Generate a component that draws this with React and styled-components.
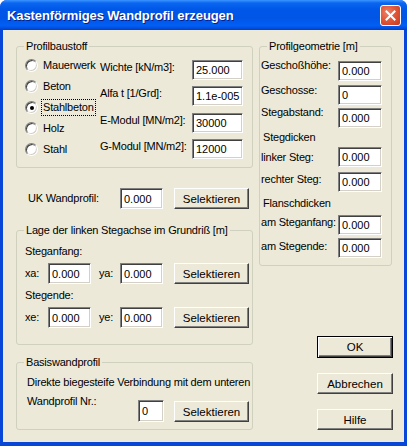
import React from "react";
import styled, { createGlobalStyle } from "styled-components";

const GlobalStyle = createGlobalStyle`
  html, body {
    margin: 0;
    padding: 0;
    background: #ffffff;
  }
  * {
    box-sizing: border-box;
  }
`;

const font = `"Liberation Sans", Arial, sans-serif`;

const Window = styled.div`
  width: 407px;
  height: 446px;
  display: flex;
  flex-direction: column;
  background: #0846d8;
  border-radius: 7px 7px 0 0;
  overflow: hidden;
  font-family: ${font};
  font-size: 11px;
  letter-spacing: -0.2px;
  color: #000;
`;

const TitleBar = styled.div`
  height: 30px;
  flex: 0 0 30px;
  display: flex;
  align-items: center;
  justify-content: space-between;
  padding: 0 6px 0 7px;
  background: linear-gradient(
    180deg,
    #3d95ff 0%,
    #0a66f0 10%,
    #0058e8 30%,
    #0055e5 60%,
    #0060f5 85%,
    #0050e0 93%,
    #003ccc 100%
  );
`;

const Title = styled.div`
  color: #fff;
  font-weight: bold;
  font-size: 13px;
  letter-spacing: -0.1px;
  text-shadow: 1px 1px 0 #0a1e8a;
  padding-top: 1px;
`;

const CloseButton = styled.div`
  width: 21px;
  height: 21px;
  margin-top: 1px;
  border: 1px solid #fff;
  border-radius: 3px;
  background: radial-gradient(circle at 35% 35%, #f0826a 0%, #e0583a 45%, #c8381c 100%);
  display: flex;
  align-items: center;
  justify-content: center;
`;

const Body = styled.div`
  flex: 1;
  margin: 0 3px 4px 3px;
  background: #ece9d8;
  display: grid;
  grid-template-columns: 237px 134px;
  column-gap: 6px;
  align-items: start;
  padding: 16px 0 0 13px;
`;

const Column = styled.div`
  display: flex;
  flex-direction: column;
`;

const Group = styled.div`
  position: relative;
  width: ${(p) => p.w || 237}px;
  height: ${(p) => p.h}px;
  margin-top: ${(p) => p.mt || 0}px;
  border: 1px solid #d0d0bf;
  border-radius: 3px;
  padding: ${(p) => p.pad || "0"};
`;

const Legend = styled.span`
  position: absolute;
  top: -7px;
  left: 7px;
  padding: 0 2px;
  line-height: 13px;
  background: #ece9d8;
`;

const Text = styled.div`
  line-height: 13px;
  white-space: nowrap;
  margin-top: ${(p) => p.mt || 0}px;
  margin-left: ${(p) => p.ml || 0}px;
`;

const Edit = styled.div`
  width: ${(p) => p.w}px;
  height: ${(p) => p.h || 20}px;
  flex: 0 0 auto;
  margin-top: ${(p) => p.mt || 0}px;
  background: #fff;
  border: 1px solid;
  border-color: #808080 #ffffff #ffffff #808080;
  box-shadow: inset 1px 1px 0 #404040, inset -1px -1px 0 #d4d0c8;
  padding: 0 0 0 3px;
  display: flex;
  align-items: center;
  font-size: 11px;
  letter-spacing: 0;
  white-space: nowrap;
  overflow: hidden;
`;

const Button = styled.div`
  width: ${(p) => p.w || 75}px;
  height: ${(p) => p.h || 21}px;
  flex: 0 0 auto;
  margin-top: ${(p) => p.mt || 0}px;
  margin-left: ${(p) => p.ml || 0}px;
  align-self: ${(p) => p.align || "auto"};
  display: flex;
  align-items: center;
  justify-content: center;
  background: #ece9d8;
  border: 1px solid;
  border-color: ${(p) => (p.primary ? "#000" : "#fff #404040 #404040 #fff")};
  box-shadow: ${(p) =>
    p.primary
      ? "inset 1px 1px 0 #fff, inset -1px -1px 0 #404040, inset -2px -2px 0 #808080"
      : "inset -1px -1px 0 #808080"};
  font-size: 11.5px;
  letter-spacing: 0;
`;

/* Profilbaustoff */

const MaterialBody = styled.div`
  display: flex;
  padding-left: 8px;
`;

const RadioList = styled.div`
  width: 75px;
  padding-top: 8px;
  display: flex;
  flex-direction: column;
`;

const RadioRow = styled.div`
  height: 21px;
  display: flex;
  align-items: center;
  gap: 3px;
`;

const RadioCircle = styled.span`
  width: 13px;
  height: 13px;
  border-radius: 50%;
  border: 1px solid;
  border-color: #808080 #ffffff #ffffff #808080;
  box-shadow: inset 1px 1px 0 #404040, inset -1px -1px 0 #d4d0c8;
  background: radial-gradient(circle at 60% 60%, #ffffff 0%, #ffffff 55%, #e4e2d8 100%);
  display: flex;
  align-items: center;
  justify-content: center;

  &::after {
    content: "";
    width: 4px;
    height: 4px;
    border-radius: 50%;
    background: ${(p) => (p.checked ? "#000" : "transparent")};
  }
`;

const RadioLabel = styled.span`
  line-height: 13px;
  padding: 1px;
  border: 1px dotted ${(p) => (p.focus ? "#000" : "transparent")};
  white-space: nowrap;
`;

const FieldGrid = styled.div`
  display: grid;
  grid-template-columns: 92px 51px;
  row-gap: 5px;
  padding-top: 13px;
  align-items: start;
`;

/* rows */

const Row = styled.div`
  display: flex;
  align-items: ${(p) => p.align || "center"};
  margin-top: ${(p) => p.mt || 0}px;
  padding-left: ${(p) => p.pl || 0}px;
`;

const RowLabel = styled.div`
  width: ${(p) => p.w}px;
  flex: 0 0 auto;
  line-height: 13px;
  white-space: nowrap;
  margin-top: ${(p) => p.dy || 0}px;
  padding-left: ${(p) => p.pl || 0}px;
`;

const GeoBody = styled.div`
  display: flex;
  flex-direction: column;
  padding-left: 1px;
`;

const materials = ["Mauerwerk", "Beton", "Stahlbeton", "Holz", "Stahl"];

const constants = [
  ["Wichte [kN/m3]:", "25.000"],
  ["Alfa t [1/Grd]:", "1.1e-005"],
  ["E-Modul [MN/m2]:", "30000"],
  ["G-Modul [MN/m2]:", "12000"],
];

const CloseIcon = () => (
  <svg width="11" height="11" viewBox="0 0 11 11">
    <path d="M1.5 1.5 L9.5 9.5 M9.5 1.5 L1.5 9.5" stroke="#fff" strokeWidth="2" strokeLinecap="square" />
  </svg>
);

const GeoRow = ({ label, value, mt, dy }) => (
  <Row align="flex-start" mt={mt}>
    <RowLabel w={77} dy={dy}>
      {label}
    </RowLabel>
    <Edit w={44}>{value}</Edit>
  </Row>
);

const PointRow = ({ x, y }) => (
  <Row mt={5}>
    <RowLabel w={23}>{x}:</RowLabel>
    <Edit w={43} h={21}>0.000</Edit>
    <RowLabel w={29} pl={8}>
      {y}:
    </RowLabel>
    <Edit w={43} h={21}>0.000</Edit>
    <Button ml={11}>Selektieren</Button>
  </Row>
);

const App = () => {
  return (
    <>
      <GlobalStyle />
      <Window>
        <TitleBar>
          <Title>Kastenförmiges Wandprofil erzeugen</Title>
          <CloseButton>
            <CloseIcon />
          </CloseButton>
        </TitleBar>
        <Body>
          <Column>
            <Group h={122}>
              <Legend>Profilbaustoff</Legend>
              <MaterialBody>
                <RadioList>
                  {materials.map((m) => (
                    <RadioRow key={m}>
                      <RadioCircle checked={m === "Stahlbeton"} />
                      <RadioLabel focus={m === "Stahlbeton"}>{m}</RadioLabel>
                    </RadioRow>
                  ))}
                </RadioList>
                <FieldGrid>
                  {constants.map(([label, value]) => (
                    <React.Fragment key={label}>
                      <RowLabel w={92} dy={1}>
                        {label}
                      </RowLabel>
                      <Edit w={51}>{value}</Edit>
                    </React.Fragment>
                  ))}
                </FieldGrid>
              </MaterialBody>
            </Group>

            <Row mt={20} pl={12}>
              <RowLabel w={92}>UK Wandprofil:</RowLabel>
              <Edit w={43} h={21}>0.000</Edit>
              <Button ml={11}>Selektieren</Button>
            </Row>

            <Group h={115} mt={21} pad="14px 0 0 8px">
              <Legend>Lage der linken Stegachse im Grundriß [m]</Legend>
              <Text>Steganfang:</Text>
              <PointRow x="xa" y="ya" />
              <Text mt={5}>Stegende:</Text>
              <PointRow x="xe" y="ye" />
            </Group>

            <Group h={68} mt={17} pad="13px 0 0 10px">
              <Legend>Basiswandprofil</Legend>
              <Text>Direkte biegesteife Verbindung mit dem unteren</Text>
              <Row align="flex-start" mt={6}>
                <RowLabel w={111}>Wandprofil Nr.:</RowLabel>
                <Edit w={26} h={22} mt={5}>0</Edit>
                <Button ml={10} mt={6}>Selektieren</Button>
              </Row>
            </Group>
          </Column>

          <Column>
            <Group w={133} h={220}>
              <Legend>Profilgeometrie [m]</Legend>
              <GeoBody>
                <GeoRow label="Geschoßhöhe:" value="0.000" mt={14} dy={-2} />
                <GeoRow label="Geschosse:" value="0" mt={4} dy={-1} />
                <GeoRow label="Stegabstand:" value="0.000" mt={3} dy={-2} />
                <Text mt={3} ml={2}>Stegdicken</Text>
                <GeoRow label="linker Steg:" value="0.000" mt={3} dy={4} />
                <GeoRow label="rechter Steg:" value="0.000" mt={5} dy={1} />
                <Text mt={5} ml={2}>Flanschdicken</Text>
                <GeoRow label="am Steganfang:" value="0.000" mt={5} dy={1} />
                <GeoRow label="am Stegende:" value="0.000" mt={3} dy={2} />
              </GeoBody>
            </Group>
            <Button primary w={76} h={22} mt={70} align="flex-end">
              OK
            </Button>
            <Button w={76} mt={15} align="flex-end">
              Abbrechen
            </Button>
            <Button w={76} mt={15} align="flex-end">
              Hilfe
            </Button>
          </Column>
        </Body>
      </Window>
    </>
  );
};

export default App;
